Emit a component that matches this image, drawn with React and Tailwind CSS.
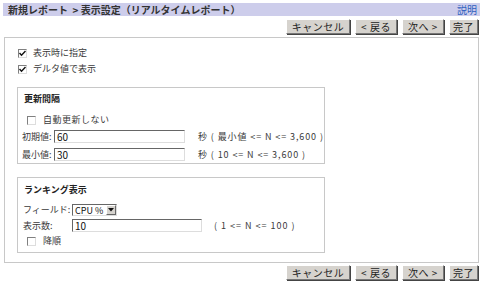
const FONT = 'font-["Noto_Sans_CJK_JP","DejaVu_Sans",sans-serif]';

function Btn({ children, w }) {
  return (
    <button
      className={`h-[15px] ${w} bg-[#d6d3ce] text-[10px] leading-none text-[#222] tracking-[0.5px] border border-t-white border-l-white border-r-[#777] border-b-[#777] shadow-[1px_1px_0_#444] flex items-center justify-center`}
    >
      {children}
    </button>
  );
}

function ButtonRow() {
  return (
    <div className="flex justify-end gap-[5px] pr-[5px] h-[15px]">
      <Btn w="w-[64px]">キャンセル</Btn>
      <Btn w="w-[42px]">&lt; 戻る</Btn>
      <Btn w="w-[42px]">次へ &gt;</Btn>
      <Btn w="w-[29px]">完了</Btn>
    </div>
  );
}

function Check({ checked }) {
  return (
    <span className="w-[9px] h-[9px] shrink-0 border border-t-[#808080] border-l-[#808080] border-r-[#ddd] border-b-[#ddd] bg-white flex items-center justify-center">
      {checked && (
        <svg width="7" height="7" viewBox="0 0 7 7">
          <path d="M0.5 3 L2.5 5.2 L6.5 1" stroke="#111" strokeWidth="1.4" fill="none" />
        </svg>
      )}
    </span>
  );
}

function Input({ value, w }) {
  return (
    <div className={`h-[13px] ${w} border border-t-[#666] border-l-[#666] border-r-[#ddd] border-b-[#ddd] bg-white text-[10px] leading-[11px] pl-[2px] text-[#111]`}>
      {value}
    </div>
  );
}

export default function App() {
  return (
    <div className={`w-[483px] h-[285px] bg-white overflow-hidden ${FONT} text-[#3a3a3a] pt-[3px]`}>
      {/* header */}
      <div className="mx-[3px] h-[13px] bg-[#cdcdeb] flex items-center justify-between pl-[5px] pr-[3px]">
        <span className="text-[10px] font-bold leading-none text-[#333] whitespace-pre">
          {'新規レポート  > 表示設定（リアルタイムレポート）'}
        </span>
        <span className="text-[10px] leading-none text-[#2f5fbf]">説明</span>
      </div>

      <div className="mt-[3px]">
        <ButtonRow />
      </div>

      {/* main panel */}
      <div className="mx-[4px] mt-[3px] h-[226px] border border-[#c8c8c8] pl-[12px] pt-[9px]">
        <div className="flex flex-col gap-[4px] text-[9px] leading-[12px]">
          <label className="flex items-center gap-[6px] h-[12px] pl-[1px]">
            <Check checked />
            <span>表示時に指定</span>
          </label>
          <label className="flex items-center gap-[6px] h-[12px] pl-[1px]">
            <Check checked />
            <span>デルタ値で表示</span>
          </label>
        </div>

        {/* 更新間隔 */}
        <div className="mt-[12px] w-[308px] h-[77px] border border-[#c8c8c8] pl-[4px] pt-[5px] text-[9px] leading-[12px]">
          <div className="font-bold text-[#222] pl-[2px]">更新間隔</div>
          <label className="mt-[9px] flex items-center gap-[7px] h-[12px] pl-[5px]">
            <Check />
            <span className="tracking-[0.5px]">自動更新しない</span>
          </label>
          <div className="mt-[4px] flex items-center h-[13px]">
            <span className="w-[32px]">初期値:</span>
            <Input value="60" w="w-[131px]" />
            <span className="ml-[13px] tracking-[0.9px]">秒 ( 最小値 &lt;= N &lt;= 3,600 )</span>
          </div>
          <div className="mt-[5px] flex items-center h-[13px]">
            <span className="w-[32px]">最小値:</span>
            <Input value="30" w="w-[131px]" />
            <span className="ml-[13px] tracking-[0.9px]">秒 ( 10 &lt;= N &lt;= 3,600 )</span>
          </div>
        </div>

        {/* ランキング表示 */}
        <div className="mt-[13px] w-[308px] h-[76px] border border-[#c8c8c8] pl-[4px] pt-[6px] text-[9px] leading-[12px]">
          <div className="font-bold text-[#222] pl-[2px]">ランキング表示</div>
          <div className="mt-[8px] flex items-center h-[12px]">
            <span className="w-[50px] pl-[1px]">フィールド:</span>
            <div className="h-[12px] w-[45px] border border-t-[#666] border-l-[#666] border-r-[#ddd] border-b-[#ddd] bg-white flex items-center justify-between text-[9px] leading-none text-[#111] pl-[2px]">
              <span>CPU %</span>
              <span className="w-[10px] h-[10px] bg-[#d6d3ce] border border-t-white border-l-white border-r-[#666] border-b-[#666] flex items-center justify-center">
                <svg width="6" height="4" viewBox="0 0 6 4">
                  <path d="M0 0 H6 L3 3.5 Z" fill="#111" />
                </svg>
              </span>
            </div>
          </div>
          <div className="mt-[3px] flex items-center h-[13px]">
            <span className="w-[50px] pl-[1px]">表示数:</span>
            <Input value="10" w="w-[130px]" />
            <span className="ml-[12px] tracking-[1px]">( 1 &lt;= N &lt;= 100 )</span>
          </div>
          <label className="mt-[3px] flex items-center gap-[7px] h-[12px] pl-[5px]">
            <Check />
            <span>降順</span>
          </label>
        </div>
      </div>

      <div className="mt-[2px]">
        <ButtonRow />
      </div>
    </div>
  );
}
